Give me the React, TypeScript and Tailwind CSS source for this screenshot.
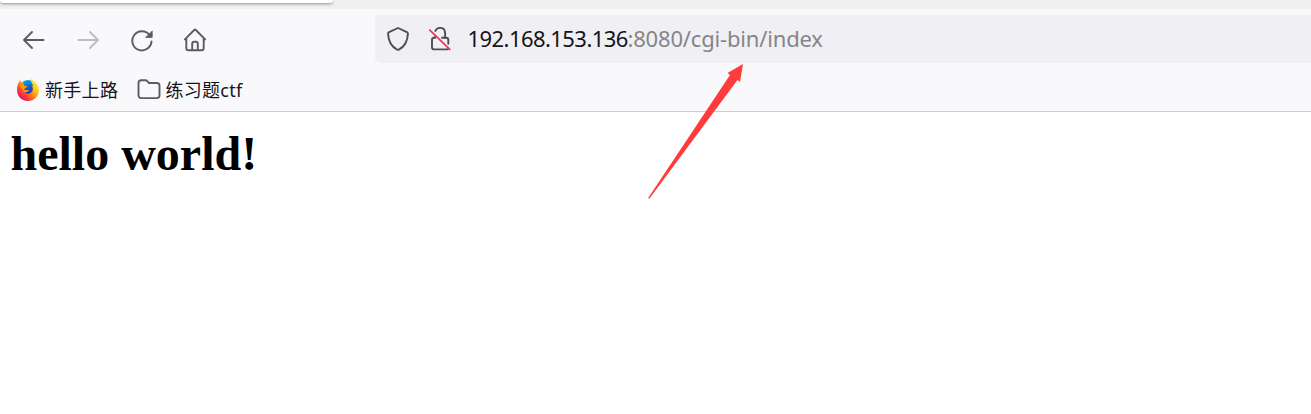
import React from 'react';

const line = {
  fill: 'none',
  stroke: '#5b5b66',
  strokeWidth: 1.9,
  strokeLinecap: 'round' as const,
  strokeLinejoin: 'round' as const,
};

function BackIcon() {
  return (
    <svg className="h-6 w-6" viewBox="0 0 24 24" {...line}>
      <path d="M21.5 12H2M10 4L2 12L10 20" />
    </svg>
  );
}

function ForwardIcon() {
  return (
    <svg className="h-6 w-6" viewBox="0 0 24 24" {...line} stroke="#bcbcc0">
      <path d="M2.5 12H22M14 4L22 12L14 20" />
    </svg>
  );
}

function ReloadIcon() {
  return (
    <svg className="h-6 w-6" viewBox="0 0 24 24" {...line}>
      <path d="M19.4 6.8A9.6 9.6 0 1 0 21.5 13.4" />
      <path d="M22.2 3.3V9.4H16Z" fill="#5b5b66" strokeWidth=".8" />
    </svg>
  );
}

function HomeIcon() {
  return (
    <svg className="h-6 w-6" viewBox="0 0 24 24" {...line}>
      <path d="M1.9 11.4L11.2 2Q12 1.2 12.8 2L22.1 11.4M3.3 10.3V20.3Q3.3 22.3 5.3 22.3H18.7Q20.7 22.3 20.7 20.3V10.3" />
      <path d="M9.2 22V16Q9.2 13.8 11.2 13.8H12.8Q14.8 13.8 14.8 16V22" />
    </svg>
  );
}

function ShieldIcon() {
  return (
    <svg className="h-6 w-6" viewBox="0 0 24 24" {...line} stroke="#4c4c53">
      <path d="M12 1L20.9 5.1Q22 5.6 21.9 6.9C21.6 13.6 18.6 19.6 12.8 22.7Q12 23.1 11.2 22.7C5.4 19.6 2.4 13.6 2.1 6.9Q2 5.6 3.1 5.1Z" />
    </svg>
  );
}

function InsecureLockIcon() {
  return (
    <svg className="h-6 w-6" viewBox="0 0 24 24" {...line} stroke="#4c4c53">
      <path d="M7.4 3.8Q8.9 .9 11.9 .9Q17.1 .9 17.1 6.3V10.7H18.1Q20.3 10.7 20.3 12.9V16.8" />
      <path d="M7.2 9V10.7H6.2Q4 10.7 4 12.9V20.2Q4 22.4 6.2 22.4H18.1Q19.5 22.4 20 22" />
      <path d="M14 10.7H17" />
      <path d="M1.8 3.1L21.8 22.4" stroke="#f8315f" strokeWidth="1.8" />
    </svg>
  );
}

function FirefoxIcon() {
  return (
    <svg className="h-6 w-6 shrink-0" viewBox="0 0 24 24">
      <defs>
        <linearGradient id="fire" x1=".9" y1=".1" x2=".15" y2=".9">
          <stop stopColor="#fff44f" />
          <stop offset=".35" stopColor="#ffbd16" />
          <stop offset=".67" stopColor="#ff5b24" />
          <stop offset="1" stopColor="#e60071" />
        </linearGradient>
        <linearGradient id="globe" x1=".2" y1="0" x2=".7" y2="1">
          <stop stopColor="#00b9ef" />
          <stop offset=".5" stopColor="#1257cc" />
          <stop offset="1" stopColor="#3b167d" />
        </linearGradient>
      </defs>
      <circle cx="12" cy="11.4" r="9.4" fill="url(#globe)" />
      <path fill="url(#fire)" d="M14.7 .6C16.3 2 17.3 3.1 18 4.6L19 4C21.5 6 23.1 8.9 23 12.6C22.7 18.8 17.8 23.2 11.7 23.1C5.5 22.9 1 18.1 1 12.1C1 8.5 1.9 5.3 4.2 2.1L4.8 4.6C5.5 4 6.6 3.7 7.5 3.7Q7.2 5 8 7.7L11 8.3C10.8 9.5 9.4 9.9 8.5 10.5L8.1 12.3C10 11.6 11.4 12.8 13.4 12.1C12.3 14.2 10.7 14.5 8.8 14.2C11.1 17.3 15.9 15.5 16.7 12.1C17.2 9.9 16.5 8.7 15.4 7.7L17.2 8.2C16.6 5.9 14.6 4.4 14.7 .6Z" />
      <path fill="#ff980e" d="M3.3 6.8Q5.6 5.2 8 7.7L11 8.3Q10.8 9.5 8.5 10.5L8.1 12.3Q10 11.6 12.2 12.3Q11 14.2 8.8 14.2Q7 13.3 6.7 11Q4.3 10.2 3.3 6.8Z" />
    </svg>
  );
}

function FolderIcon() {
  return (
    <svg className="h-6 w-6 shrink-0" viewBox="0 0 24 24" {...line}>
      <path d="M1.5 5Q1.5 2.3 4.3 2.3H8.3Q9.5 2.3 10.3 3.2L12 5H19.7Q22.5 5 22.5 7.8V17.3Q22.5 20.1 19.7 20.1H4.3Q1.5 20.1 1.5 17.3Z" />
    </svg>
  );
}

export default function App() {
  return (
    <div className="relative h-[414px] w-full overflow-hidden bg-white">
      <header className="h-28 border-b border-[#cccccf] bg-[#f9f9fb]">
        <div className="h-[9px] overflow-hidden bg-[#f0f0f0]">
          <div className="h-[3px] w-[333px] rounded-b-[5px] bg-white shadow-[0_1px_3px_#8c8c98]" />
        </div>
        <div className="flex h-[60px] items-start">
          <nav className="flex w-[375px] gap-[30px] pl-[22px] pt-[19px]">
            <button aria-label="Back" className="h-6 w-6"><BackIcon /></button>
            <button aria-label="Forward" className="h-6 w-6"><ForwardIcon /></button>
            <button aria-label="Reload" className="h-6 w-6"><ReloadIcon /></button>
            <button aria-label="Home" className="-ml-[0.7px] h-6 w-6"><HomeIcon /></button>
          </nav>
          <div className="mt-[6px] flex h-12 flex-1 items-center rounded-l-[6px] bg-[#f0f0f4] pl-[11px]">
            <ShieldIcon />
            <span className="ml-[18px]"><InsecureLockIcon /></span>
            <div className="ml-[15.5px] flex whitespace-nowrap pb-0.5 font-['Noto_Sans',sans-serif] text-[22px] leading-[30px]">
              <span className="w-40 tracking-[-0.56px] text-[#15141a]">192.168.153.136</span>
              <span className="tracking-[-0.18px] text-[#858588]">:8080/cgi-bin/index</span>
            </div>
          </div>
        </div>
        <div className="flex h-[42px] items-center pl-4 font-['Noto_Sans','Noto_Sans_CJK_SC',sans-serif] text-[18px] leading-6 text-[#15141a]">
          <div className="flex w-[120.5px] items-center gap-[5px]">
            <FirefoxIcon />
            <span className="whitespace-nowrap tracking-[0.3px]">新手上路</span>
          </div>
          <div className="flex items-center gap-[5px]">
            <FolderIcon />
            <span className="whitespace-nowrap tracking-[0.25px]">练习题ctf</span>
          </div>
        </div>
      </header>
      <main className="pl-[10.5px] pt-[15px]">
        <h1 className="font-['Liberation_Serif',serif] text-[48px] font-bold leading-[54px] text-black">hello world!</h1>
      </main>
      <svg className="pointer-events-none absolute left-[640px] top-[56px] h-[148px] w-[112px]" viewBox="640 56 112 148">
        <path fill="#ff3b3b" d="M743 64L740 82L737.5 80L649.5 198.5Q648 199 648.5 197.5L730 75L727.5 73Z" />
      </svg>
    </div>
  );
}
